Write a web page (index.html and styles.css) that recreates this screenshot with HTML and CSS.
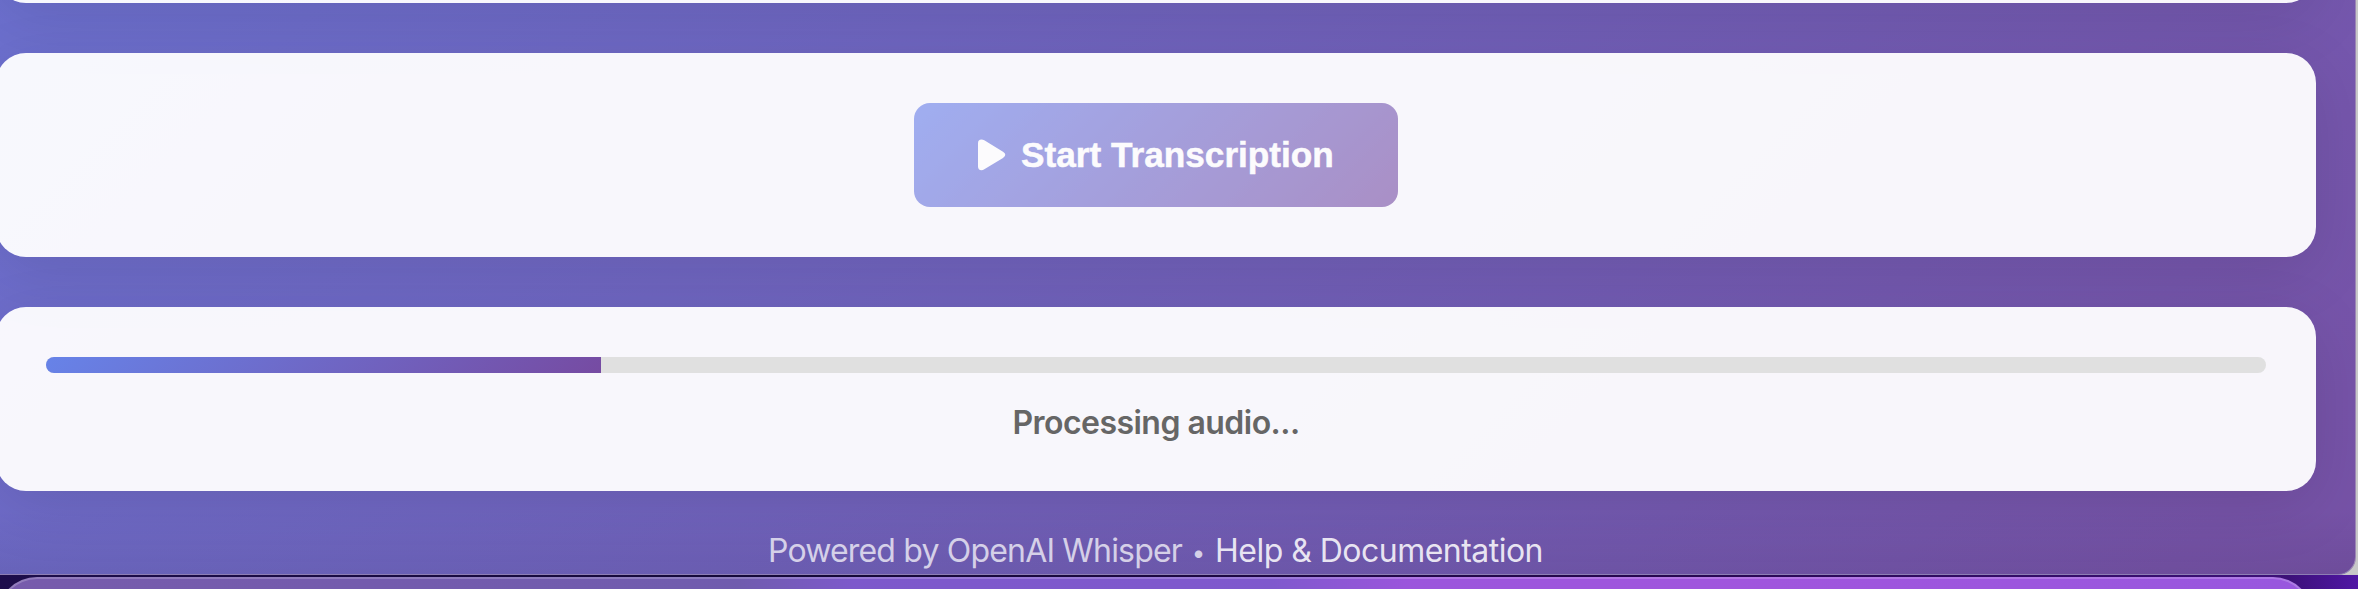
FILE: index.html
```html
<!DOCTYPE html>
<html lang="en">
<head>
<meta charset="utf-8">
<title>Transcription</title>
<link rel="stylesheet" href="styles.css">
</head>
<body>
<div class="desktop">
  <main class="window">
    <section class="card card-previous"></section>
    <section class="card card-action">
      <button class="start" disabled>
        <svg class="play" viewBox="0 0 28 32" width="28" height="32"><path d="M0 4.2Q0 .5 3.5.5Q5 .5 6.300 1.300L25 12.700Q27.300 14.200 27.300 15.800Q27.300 17.400 25 18.900L6.300 30.300Q5 31.200 3.500 31.200Q0 31.200 0 27.500Z" fill="currentColor"/></svg>
        <span class="start-label">Start Transcription</span>
      </button>
    </section>
    <section class="card card-progress">
      <div class="track"><div class="fill" style="width:25%"></div></div>
      <p class="status"><span>Processing audio...</span></p>
    </section>
    <footer class="footer"><span class="powered">Powered by OpenAI Whisper</span><span class="dot">•</span><a class="help">Help &amp; Documentation</a></footer>
  </main>
  <div class="dock"></div>
</div>
</body>
</html>
```

FILE: styles.css
```css
* { box-sizing: border-box; }
body { margin: 0; overflow: hidden; }
.desktop {
  width: 2358px;
  height: 589px;
  overflow: hidden;
  background: linear-gradient(#c8c8c8, #c8c8c8) right top / 30px 575px no-repeat, linear-gradient(90deg, #1d0d4b, #150a38 35%, #26084f 70%, #3c1078 97%, #5017a5);
}
.window {
  display: flex;
  flex-direction: column;
  gap: 50px;
  width: 2376px;
  height: 575px;
  margin-left: -20px;
  padding: 0 40px 0 16px;
  overflow: hidden;
  border-right: 1px solid #9c86b4;
  border-bottom: 1px solid #8d7eb4;
  border-radius: 0 0 18px 0;
  background: linear-gradient(transparent 510px, rgba(0, 0, 0, .07)), linear-gradient(135deg, #6c73d3 0%, #7653a8 88%, #7651a4 100%) 0 50% / 100% 1000px;
}
.card {
  flex: none;
  width: 2320px;
  border-radius: 30px;
  background: rgba(255, 255, 255, .95);
  box-shadow: 0 16px 64px rgba(0, 0, 0, .1);
}
.card-previous { height: 200px; margin-top: -197px; }
.card-action { display: flex; justify-content: center; height: 204px; padding: 50px; }
.start {
  display: flex;
  align-items: center;
  width: 484px;
  height: 104px;
  padding: 0 0 0 64px;
  border: 0;
  border-radius: 16px;
  opacity: .6;
  color: #fff;
  font: bold 35.2px "Liberation Sans", Arial, sans-serif;
  background: linear-gradient(135deg, #667eea 0%, #764ba2 100%);
}
.play { margin-right: 15px; }
.start-label { white-space: nowrap; -webkit-text-stroke: .5px #fff; }
.card-progress { height: 184px; padding: 50px; }
.track { height: 16px; border-radius: 8px; overflow: hidden; background: #e0e0e0; }
.fill { height: 100%; background: linear-gradient(135deg, #6783e8, #764ba2); }
.status {
  margin: 30px 0 0;
  text-align: center;
  color: #666;
  font: 600 32px/40px Inter, sans-serif;
  letter-spacing: -.53px;
}
.footer {
  display: flex;
  justify-content: center;
  align-items: center;
  height: 40px;
  margin-top: -10px;
  white-space: nowrap;
  color: rgba(255, 255, 255, .72);
  font: 400 32px/40px Inter, sans-serif;
}
.powered { letter-spacing: -.82px; }
.dot { width: 33px; text-align: center; font-size: 24px; line-height: 37px; padding-top: 3px; }
.help { color: rgba(255, 255, 255, .85); letter-spacing: -.52px; }
.dock {
  height: 40px;
  width: 2316px;
  margin: 2px 0 0 -3px;
  border: 2px solid rgba(255, 255, 255, .2);
  border-radius: 50px 50px 0 0;
  background: linear-gradient(90deg, #775bac, #705cae 32%, #7d59cb 37%, #7f59cd 55%, #9b55dc 61%, #a055dd 75%, #9857de) border-box;
}
```
